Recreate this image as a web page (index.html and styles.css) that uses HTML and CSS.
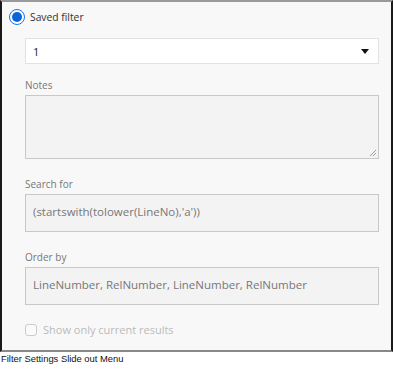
FILE: index.html
```html
<!DOCTYPE html>
<html lang="en">
<head>
    <meta charset="UTF-8">
    <title>Filter Settings Slide out Menu</title>
    <link rel="stylesheet" href="styles.css">
</head>
<body>
    <div class="panel">
        <label class="radio-row">
            <span class="radio"><span class="radio-dot"></span></span>
            <span>Saved filter</span>
        </label>

        <div class="select">
            <span>1</span>
            <svg class="caret" width="8" height="5" viewBox="0 0 8 5"><path d="M0 0h8L4 5z" fill="#111"/></svg>
        </div>

        <div class="field">
            <div class="field-label">Notes</div>
            <div class="textarea">
                <svg class="grip" width="7" height="7" viewBox="0 0 7 7"><path d="M7 1L1 7M7 4L4 7" stroke="#888" stroke-width="0.8"/></svg>
            </div>
        </div>

        <div class="field">
            <div class="field-label">Search for</div>
            <div class="input">(startswith(tolower(LineNo),'a'))</div>
        </div>

        <div class="field">
            <div class="field-label">Order by</div>
            <div class="input">LineNumber, RelNumber, LineNumber, RelNumber</div>
        </div>

        <label class="check-row">
            <span class="checkbox"></span>
            <span>Show only current results</span>
        </label>
    </div>
    <div class="caption">Filter Settings Slide out Menu</div>
</body>
</html>
```

FILE: styles.css
```css
body {
    margin: 0;
    font-family: "Open Sans", "Noto Sans", sans-serif;
    background-color: white;
}
.panel {
    box-sizing: border-box;
    width: 393px;
    height: 352px;
    background-color: #f8f8f8;
    border-top: 2px solid #9a9a9a;
    border-left: 2px solid #1a1a1a;
    border-right: 2px solid #1a1a1a;
    border-bottom: 2px solid #888;
    padding: 6px 12px 0 23px;
    font-size: 11px;
    color: #333;
}
.radio-row {
    display: flex;
    align-items: center;
    gap: 5px;
    margin-left: -16px;
    height: 18px;
    font-size: 10.3px;
}
.radio {
    box-sizing: border-box;
    width: 16px;
    height: 16px;
    border-radius: 50%;
    border: 1.5px solid #1a73e8;
    background: white;
    display: flex;
    align-items: center;
    justify-content: center;
}
.radio-dot {
    width: 10px;
    height: 10px;
    border-radius: 50%;
    background-color: #0a66d8;
}
.select {
    margin-top: 12px;
    height: 26px;
    box-sizing: border-box;
    background-color: white;
    border: 1px solid #e2e2e2;
    display: flex;
    align-items: center;
    justify-content: space-between;
    padding: 0 9px 0 7px;
    font-size: 11px;
    color: #222;
}
.field {
    margin-top: 14px;
}
.field + .field {
    margin-top: 18px;
}
.field-label {
    color: #777;
    font-size: 10px;
    line-height: 14px;
    margin-bottom: 3px;
}
.textarea {
    height: 64px;
    box-sizing: border-box;
    background-color: #f3f3f3;
    border: 1px solid #c8c8c8;
    display: flex;
    align-items: flex-end;
    justify-content: flex-end;
    padding: 0 2px 2px 0;
}
.input {
    height: 38px;
    box-sizing: border-box;
    background-color: #f3f3f3;
    border: 1px solid #c8c8c8;
    padding: 9px 7px 0;
    color: #777;
    font-size: 11.5px;
}
.check-row {
    display: flex;
    align-items: center;
    gap: 6px;
    margin-top: 17px;
    color: #bbb;
    font-size: 11px;
}
.checkbox {
    box-sizing: border-box;
    width: 12px;
    height: 12px;
    border: 1px solid #ccc;
    border-radius: 3px;
    background: #fafafa;
}
.caption {
    font-family: "Liberation Sans", Arial, sans-serif;
    font-size: 9.4px;
    color: #111;
    padding: 1px 0 0 1px;
}
```
